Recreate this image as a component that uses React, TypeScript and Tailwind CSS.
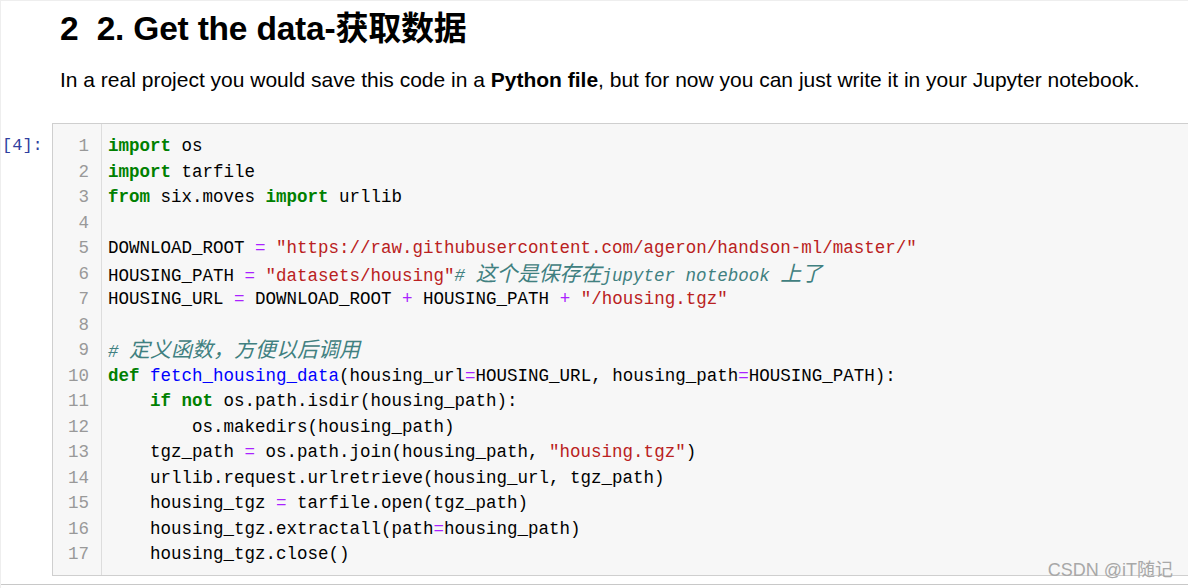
import React from "react";

type Seg = [string, string?];

const K = "text-[#008000] font-bold";
const S = "text-[#ba2121]";
const O = "text-[#aa22ff]";
const C = "text-[#408080] italic";
const F = "text-[#0000ff]";

const cjk = "font-['Noto_Sans_CJK_SC',sans-serif] text-[21px] leading-none";

const lines: Seg[][] = [
  [["import", K], [" os"]],
  [["import", K], [" tarfile"]],
  [["from", K], [" six.moves "], ["import", K], [" urllib"]],
  [],
  [["DOWNLOAD_ROOT "], ["=", O], [" "], ['"https://raw.githubusercontent.com/ageron/handson-ml/master/"', S]],
  [["HOUSING_PATH "], ["=", O], [" "], ['"datasets/housing"', S], ["# ", C], ["这个是保存在", C + " cjk"], ["jupyter notebook ", C], ["上了", C + " cjk"]],
  [["HOUSING_URL "], ["=", O], [" DOWNLOAD_ROOT "], ["+", O], [" HOUSING_PATH "], ["+", O], [" "], ['"/housing.tgz"', S]],
  [],
  [["# ", C], ["定义函数，方便以后调用", C + " cjk"]],
  [["def", K], [" "], ["fetch_housing_data", F], ["(housing_url"], ["=", O], ["HOUSING_URL, housing_path"], ["=", O], ["HOUSING_PATH):"]],
  [["    "], ["if", K], [" "], ["not", K], [" os.path.isdir(housing_path):"]],
  [["        os.makedirs(housing_path)"]],
  [["    tgz_path "], ["=", O], [" os.path.join(housing_path, "], ['"housing.tgz"', S], [")"]],
  [["    urllib.request.urlretrieve(housing_url, tgz_path)"]],
  [["    housing_tgz "], ["=", O], [" tarfile.open(tgz_path)"]],
  [["    housing_tgz.extractall(path"], ["=", O], ["housing_path)"]],
  [["    housing_tgz.close()"]],
];

function Seg({ s }: { s: Seg }) {
  const [text, cls] = s;
  if (!cls) return <span>{text}</span>;
  if (cls.endsWith(" cjk")) {
    return <span className={cls.replace(" cjk", "") + " " + cjk}>{text}</span>;
  }
  return <span className={cls}>{text}</span>;
}

export default function App() {
  return (
    <div className="relative w-[1188px] h-[588px] overflow-hidden bg-white border-l border-t border-[#eeeeee] font-['Liberation_Sans',Arial,sans-serif] text-black">
      <div className="pl-[59px] pt-[5px]">
        <h2 className="text-[33.5px] font-bold leading-[40px] tracking-[-0.2px]">
          2{"\u00a0\u00a0"}2. Get the data-
          <span className="font-['Noto_Sans_CJK_SC',sans-serif] text-[33px]">获取数据</span>
        </h2>
        <p className="mt-[18px] text-[21px] leading-[26px]">
          In a real project you would save this code in a <b>Python file</b>, but for now you can just write it in your Jupyter notebook.
        </p>
      </div>

      <div className="mt-[30px] flex">
        <div className="w-[51px] shrink-0 pt-[10px] pl-[1px] font-['Liberation_Mono',monospace] text-[17px] leading-[25.5px] text-[#303f9f]">
          [4]:
        </div>
        <div className="flex flex-1 border border-r-0 border-[#cfcfcf] bg-[#f7f7f7] font-['Liberation_Mono','Noto_Sans_CJK_SC',monospace] text-[17.5px] leading-[25.5px] text-black">
          <div className="w-[49px] shrink-0 border-r border-[#dddddd] pt-[10px] pb-[7px] pr-[12px] text-right text-[#999999]">
            {lines.map((_, i) => (
              <div key={i} className="h-[25.5px]">{i + 1}</div>
            ))}
          </div>
          <div className="flex-1 pl-[6px] pt-[10px] pb-[7px] whitespace-pre">
            {lines.map((l, i) => (
              <div key={i} className="h-[25.5px]">
                {l.length === 0 ? " " : l.map((s, j) => <Seg key={j} s={s} />)}
              </div>
            ))}
          </div>
        </div>
      </div>

      <div className="mt-[8px] h-px bg-[#c8c8c8]" />

      <div className="absolute right-[15px] top-[557px] font-['Liberation_Sans','Noto_Sans_CJK_SC',sans-serif] text-[18px] leading-[24px] text-[#a8a8a8]">
        CSDN @iT随记
      </div>
    </div>
  );
}
